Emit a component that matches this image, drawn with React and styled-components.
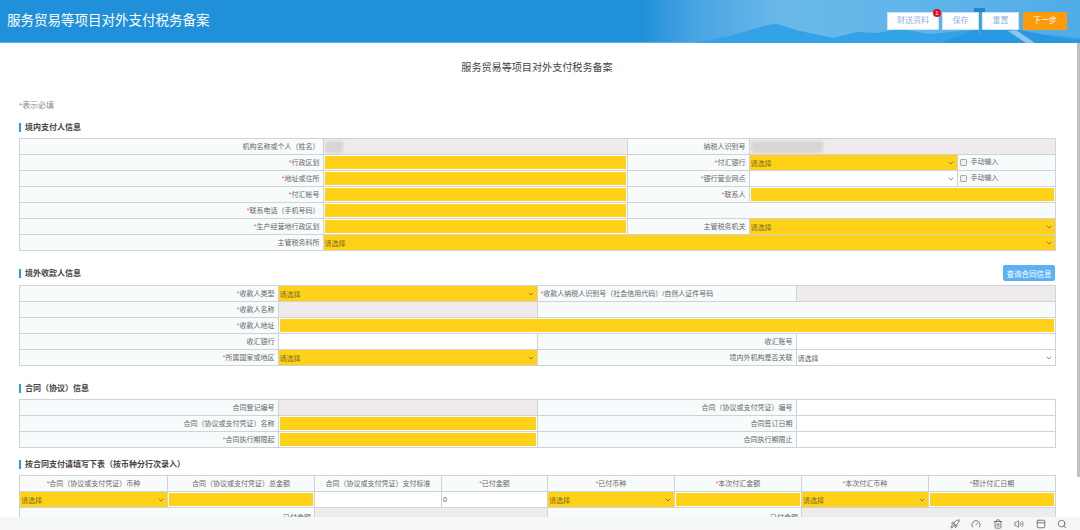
import React from "react";
import styled, { createGlobalStyle } from "styled-components";
import { ChevronDown, Rocket, Gauge, Trash2, Volume2, PanelTop, Search } from "lucide-react";

const GlobalStyle = createGlobalStyle`
  html, body {
    margin: 0;
    height: 100%;
    overflow: hidden;
    background: #fff;
    font-family: "Liberation Sans", "Noto Sans CJK SC", sans-serif;
  }
  * { box-sizing: border-box; }
`;

const Page = styled.div`
  position: relative;
  display: flex;
  flex-direction: column;
  height: 100vh;
`;

const Header = styled.header`
  position: relative;
  flex: none;
  display: flex;
  align-items: center;
  justify-content: space-between;
  height: 43px;
  padding: 0 13px 0 7px;
  border-bottom: 1px solid #58b4ee;
  background: linear-gradient(90deg, #2090da 0, #2090da 640px, #45a2e0 690px, #6bb9ea 780px, #60b4e9 920px, #50ace7 1080px);
`;

const HeaderArt = styled.svg`
  position: absolute;
  left: 0;
  top: 0;
  width: 1080px;
  height: 43px;
`;

const HeaderTitle = styled.h1`
  position: relative;
  margin: 0;
  color: #fff;
  font-size: 13.5px;
  font-weight: 400;
  line-height: 18px;
`;

const HeaderActions = styled.div`
  position: relative;
  display: flex;
  gap: 3px;
  margin-top: -1px;
`;

const ActionButton = styled.button`
  position: relative;
  width: ${p => p.$w}px;
  height: 18px;
  margin-left: ${p => p.$gap || 0}px;
  padding: 0;
  border: 1px solid ${p => (p.$primary ? "#ff9a0a" : "#cde4fa")};
  background: ${p => (p.$primary ? "#ff9a0a" : "#fff")};
  color: ${p => (p.$primary ? "#fff" : "#93b3e6")};
  font: inherit;
  font-size: 8px;
  line-height: 16px;
`;

const Badge = styled.span`
  position: absolute;
  top: -4px;
  right: -3px;
  width: 8px;
  height: 8px;
  border-radius: 50%;
  background: #e8091a;
  color: #fff;
  font-size: 6px;
  line-height: 8px;
  text-align: center;
`;

const Main = styled.main`
  flex: 1;
  min-height: 0;
  overflow: hidden;
  padding: 0 25px 0 19px;
`;

const FormTitle = styled.h2`
  margin: 18px 0 0;
  color: #444;
  font-size: 10.1px;
  font-weight: 400;
  line-height: 14px;
  text-align: center;
`;

const RequiredNote = styled.div`
  margin-top: 26px;
  color: #888;
  font-size: 8px;
  line-height: 10px;
`;

const Star = styled.span`
  color: #f4606c;
`;

const SectionRow = styled.div`
  display: flex;
  align-items: center;
  justify-content: space-between;
  height: ${p => p.$h || 10}px;
  margin-top: ${p => p.$top}px;
  margin-bottom: ${p => p.$bottom}px;
`;

const SectionTitle = styled.h3`
  margin: 0;
  padding-left: 4px;
  border-left: 2px solid #2b9af3;
  color: #444;
  font-size: 8px;
  font-weight: 700;
  line-height: 9px;
`;

const QueryButton = styled.button`
  width: 52px;
  height: 16px;
  padding: 0;
  border: 0;
  border-radius: 2px;
  background: #5cb1f5;
  color: #fff;
  font: inherit;
  font-size: 7.5px;
`;

const Table = styled.table`
  width: 1036px;
  table-layout: fixed;
  border-collapse: collapse;
  border: 1px solid #cfd3d6;
  & tr { height: 16px; }
`;

const Label = styled.td`
  height: 16px;
  padding: ${p => (p.$low ? "4px 3px 0" : "0 3px")};
  overflow: hidden;
  border: 1px solid #cfd3d6;
  background: #f7fbfc;
  color: #666;
  font-size: 7px;
  line-height: 10px;
  white-space: nowrap;
  text-align: ${p => p.$align || "right"};
`;

const Value = styled.td`
  height: 16px;
  padding: ${p => (p.$tight ? 0 : "1px")};
  border: 1px solid #cfd3d6;
  background: ${p => (p.$disabled ? "#efebec" : p.$fill ? "#ffd119" : "#fff")};
  color: #555;
  font-size: 7px;
  vertical-align: middle;
`;

const YellowInput = styled.input`
  display: block;
  width: 100%;
  height: 13px;
  padding: 0;
  border: 0;
  background: #ffd119;
`;

const SelectBox = styled.div`
  display: flex;
  align-items: center;
  justify-content: space-between;
  height: 14px;
  padding: 0 1px;
  color: ${p => (p.$fill ? "#7b6a1e" : "#666")};
  font-size: 7px;
`;

const SelectArrow = styled(ChevronDown)`
  width: 8px;
  height: 8px;
  margin-right: 1px;
  color: #555;
`;

const Masked = styled.div`
  width: ${p => p.$w}px;
  height: 12px;
  border-radius: 3px;
  background: #d8d5d6;
  filter: blur(1.5px);
`;

const CheckLabel = styled.label`
  display: flex;
  align-items: center;
  gap: 4px;
  margin-left: -1px;
  margin-top: -1px;
  color: #666;
  font-size: 7px;
`;

const CheckBox = styled.input`
  appearance: none;
  width: 7px;
  height: 7px;
  margin: 0;
  border: 1px solid #aaa;
  border-radius: 1px;
  background: #f2f2f2;
`;

const Footer = styled.footer`
  flex: none;
  display: flex;
  align-items: center;
  justify-content: flex-end;
  gap: 11.5px;
  height: 13px;
  padding-right: 13px;
  background: #f5f6f7;
  color: #666;
  & svg { width: 10px; height: 10px; }
`;

const ScrollThumb = styled.div`
  position: absolute;
  top: 43px;
  right: 0;
  width: 3px;
  height: 434px;
  background: #c1c1c1;
`;

const Req = ({ children }) => (
  <>
    <Star>*</Star>
    {children}
  </>
);

const YellowCell = ({ span }) => (
  <Value colSpan={span}>
    <YellowInput readOnly />
  </Value>
);

const SelectCell = ({ span, fill = true, text = "请选择" }) => (
  <Value colSpan={span} $fill={fill} $tight>
    <SelectBox $fill={fill}>
      <span>{text}</span>
      <SelectArrow strokeWidth={2} />
    </SelectBox>
  </Value>
);

const Manual = () => (
  <Label $align="left">
    <CheckLabel>
      <CheckBox type="checkbox" readOnly />
      手动输入
    </CheckLabel>
  </Label>
);

const Cols = ({ widths }) => (
  <colgroup>
    {widths.map((w, i) => (
      <col key={i} style={{ width: w }} />
    ))}
  </colgroup>
);

const fourCols = [258.5, 259, 259, 259.5];

export default function App() {
  return (
    <Page>
      <GlobalStyle />
      <Header>
        <HeaderArt viewBox="0 0 1080 43">
          <path d="M695 43 733 35 767 25 777 24 800 31 833 38 857 32 877 33 900 29 930 34 960 31 1000 28 1040 34 1080 38V43Z" fill="#33a2e6" />
          <path d="M940 43 975 30 1010 28 1060 38 1080 40V43Z" fill="#2a98e0" />
          <path d="M1008 31 1016 30 1035 43 1026 43Z" fill="#8cc6ee" />
          <rect x="974" y="8" width="11" height="5" fill="#1f86cf" />
          <rect x="978" y="12" width="3" height="22" fill="#3a9fe2" />
        </HeaderArt>
        <HeaderTitle>服务贸易等项目对外支付税务备案</HeaderTitle>
        <HeaderActions>
          <ActionButton $w={52}>
            财送资料
            <Badge>1</Badge>
          </ActionButton>
          <ActionButton $w={37}>保存</ActionButton>
          <ActionButton $w={37}>重置</ActionButton>
          <ActionButton $w={44} $primary $gap={1}>下一步</ActionButton>
        </HeaderActions>
      </Header>

      <Main>
        <FormTitle>服务贸易等项目对外支付税务备案</FormTitle>
        <RequiredNote>
          <Star>*</Star>表示必填
        </RequiredNote>

        <SectionRow $top={11} $bottom={6}>
          <SectionTitle>境内支付人信息</SectionTitle>
        </SectionRow>
        <Table>
          <Cols widths={[303.5, 304, 122, 208, 98.5]} />
          <tbody>
            <tr>
              <Label>机构名称或个人（姓名）</Label>
              <Value $disabled><Masked $w={18} /></Value>
              <Label>纳税人识别号</Label>
              <Value $disabled colSpan={2}><Masked $w={72} /></Value>
            </tr>
            <tr>
              <Label><Req>行政区划</Req></Label>
              <YellowCell />
              <Label><Req>付汇银行</Req></Label>
              <SelectCell />
              <Manual />
            </tr>
            <tr>
              <Label><Req>地址或住所</Req></Label>
              <YellowCell />
              <Label><Req>银行营业网点</Req></Label>
              <SelectCell fill={false} text="" />
              <Manual />
            </tr>
            <tr>
              <Label><Req>付汇帐号</Req></Label>
              <YellowCell />
              <Label><Req>联系人</Req></Label>
              <YellowCell span={2} />
            </tr>
            <tr>
              <Label><Req>联系电话（手机号码）</Req></Label>
              <YellowCell />
              <Label colSpan={3} />
            </tr>
            <tr>
              <Label><Req>生产经营地行政区划</Req></Label>
              <YellowCell />
              <Label>主管税务机关</Label>
              <SelectCell span={2} />
            </tr>
            <tr>
              <Label>主管税务科所</Label>
              <SelectCell span={4} />
            </tr>
          </tbody>
        </Table>

        <SectionRow $h={16} $top={14} $bottom={4}>
          <SectionTitle>境外收款人信息</SectionTitle>
          <QueryButton>查询合同信息</QueryButton>
        </SectionRow>
        <Table>
          <Cols widths={fourCols} />
          <tbody>
            <tr>
              <Label><Req>收款人类型</Req></Label>
              <SelectCell />
              <Label $align="left"><Req>收款人纳税人识别号（社会信用代码）/自然人证件号码</Req></Label>
              <Value $disabled />
            </tr>
            <tr>
              <Label><Req>收款人名称</Req></Label>
              <Value $disabled />
              <Label colSpan={2} />
            </tr>
            <tr>
              <Label><Req>收款人地址</Req></Label>
              <YellowCell span={3} />
            </tr>
            <tr>
              <Label>收汇银行</Label>
              <Value />
              <Label>收汇账号</Label>
              <Value />
            </tr>
            <tr>
              <Label><Req>所属国家或地区</Req></Label>
              <SelectCell />
              <Label>境内外机构是否关联</Label>
              <SelectCell fill={false} />
            </tr>
          </tbody>
        </Table>

        <SectionRow $top={17} $bottom={6}>
          <SectionTitle>合同（协议）信息</SectionTitle>
        </SectionRow>
        <Table>
          <Cols widths={fourCols} />
          <tbody>
            <tr>
              <Label>合同登记编号</Label>
              <Value $disabled />
              <Label>合同（协议或支付凭证）编号</Label>
              <Value />
            </tr>
            <tr>
              <Label>合同（协议或支付凭证）名称</Label>
              <YellowCell />
              <Label>合同签订日期</Label>
              <Value />
            </tr>
            <tr>
              <Label><Req>合同执行期限起</Req></Label>
              <YellowCell />
              <Label>合同执行期限止</Label>
              <Value />
            </tr>
          </tbody>
        </Table>

        <SectionRow $top={11} $bottom={6}>
          <SectionTitle>按合同支付请填写下表（按币种分行次录入）</SectionTitle>
        </SectionRow>
        <Table>
          <Cols widths={[148, 147, 127, 106, 127, 127, 127, 127]} />
          <tbody>
            <tr>
              <Label $align="center"><Req>合同（协议或支付凭证）币种</Req></Label>
              <Label $align="center">合同（协议或支付凭证）总金额</Label>
              <Label $align="center">合同（协议或支付凭证）支付标准</Label>
              <Label $align="center"><Req>已付金额</Req></Label>
              <Label $align="center"><Req>已付币种</Req></Label>
              <Label $align="center"><Req>本次付汇金额</Req></Label>
              <Label $align="center"><Req>本次付汇币种</Req></Label>
              <Label $align="center"><Req>预计付汇日期</Req></Label>
            </tr>
            <tr>
              <SelectCell />
              <YellowCell />
              <Value />
              <Value>0</Value>
              <SelectCell />
              <YellowCell />
              <SelectCell />
              <YellowCell />
            </tr>
            <tr>
              <Label colSpan={2} $low>已付金额</Label>
              <Value $disabled colSpan={2} />
              <Label colSpan={2} $low>已付金额</Label>
              <Value $disabled colSpan={2} />
            </tr>
          </tbody>
        </Table>
      </Main>

      <Footer>
        <Rocket />
        <Gauge />
        <Trash2 />
        <Volume2 />
        <PanelTop />
        <Search />
      </Footer>
      <ScrollThumb />
    </Page>
  );
}
